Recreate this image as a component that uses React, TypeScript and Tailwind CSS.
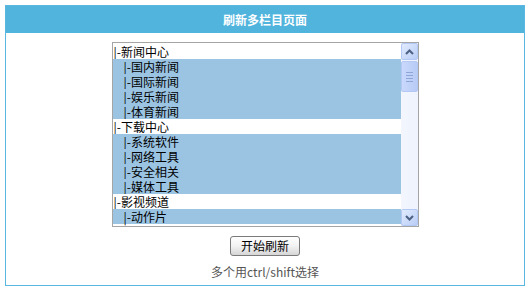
import React from 'react';

const items = [
  { label: '|-新闻中心', child: false },
  { label: '|-国内新闻', child: true },
  { label: '|-国际新闻', child: true },
  { label: '|-娱乐新闻', child: true },
  { label: '|-体育新闻', child: true },
  { label: '|-下载中心', child: false },
  { label: '|-系统软件', child: true },
  { label: '|-网络工具', child: true },
  { label: '|-安全相关', child: true },
  { label: '|-媒体工具', child: true },
  { label: '|-影视频道', child: false },
  { label: '|-动作片', child: true },
];

function ScrollButton({ up }: { up: boolean }) {
  return (
    <div className="h-[17px] w-[17px] rounded-[2px] border border-[#b4c8f6] bg-gradient-to-br from-[#e1ebfd] to-[#b9cdf6] flex items-center justify-center">
      <svg width="9" height="6" viewBox="0 0 9 6">
        <path
          d={up ? 'M1 5 L4.5 1.5 L8 5' : 'M1 1 L4.5 4.5 L8 1'}
          fill="none"
          stroke="#4d6185"
          strokeWidth="2"
        />
      </svg>
    </div>
  );
}

export default function App() {
  return (
    <div className="bg-white w-[531px] h-[293px] pt-[5px] pl-[5px] font-['Noto_Sans_CJK_SC',sans-serif] text-[12px]">
      <div className="w-[520px] h-[281px] border border-[#5bb7df] flex flex-col">
        <div className="h-[27px] bg-[#50b4dd] flex items-center justify-center text-white font-bold text-[12px] leading-none">
          刷新多栏目页面
        </div>
        <div className="flex-1 flex flex-col items-center pt-[9px]">
          <div className="w-[307px] h-[185px] border border-[#a5a5a5] flex bg-white">
            <div className="flex-1 flex flex-col pt-[1px] overflow-hidden">
              {items.map((it, i) => (
                <div
                  key={i}
                  className={`h-[15px] leading-[15px] text-black whitespace-nowrap ${
                    it.child ? 'bg-[#9bc4e3] pl-[11px]' : 'bg-white pl-[1px]'
                  }`}
                >
                  {it.label}
                </div>
              ))}
            </div>
            <div className="w-[17px] bg-gradient-to-r from-[#f3f6fd] to-[#eef3fd] flex flex-col justify-between">
              <div className="flex flex-col gap-[1px]">
                <ScrollButton up />
                <div className="h-[31px] w-[17px] rounded-[2px] border border-[#b4c8f6] bg-gradient-to-r from-[#c9d8fc] to-[#b8cbf5] flex flex-col items-center justify-center gap-[2px]">
                  <div className="w-[7px] h-[1px] bg-[#8ea5d8]" />
                  <div className="w-[7px] h-[1px] bg-[#8ea5d8]" />
                  <div className="w-[7px] h-[1px] bg-[#8ea5d8]" />
                  <div className="w-[7px] h-[1px] bg-[#8ea5d8]" />
                </div>
              </div>
              <ScrollButton up={false} />
            </div>
          </div>
          <button className="mt-[9px] w-[70px] h-[20px] rounded-[3px] border border-[#7a7a7a] bg-gradient-to-b from-white via-[#f2f2f2] to-[#d6d6d6] text-black text-[12px] leading-none flex items-center justify-center">
            开始刷新
          </button>
          <div className="mt-[9px] text-[#555555] text-[12px] leading-[14px]">多个用ctrl/shift选择</div>
        </div>
      </div>
    </div>
  );
}
